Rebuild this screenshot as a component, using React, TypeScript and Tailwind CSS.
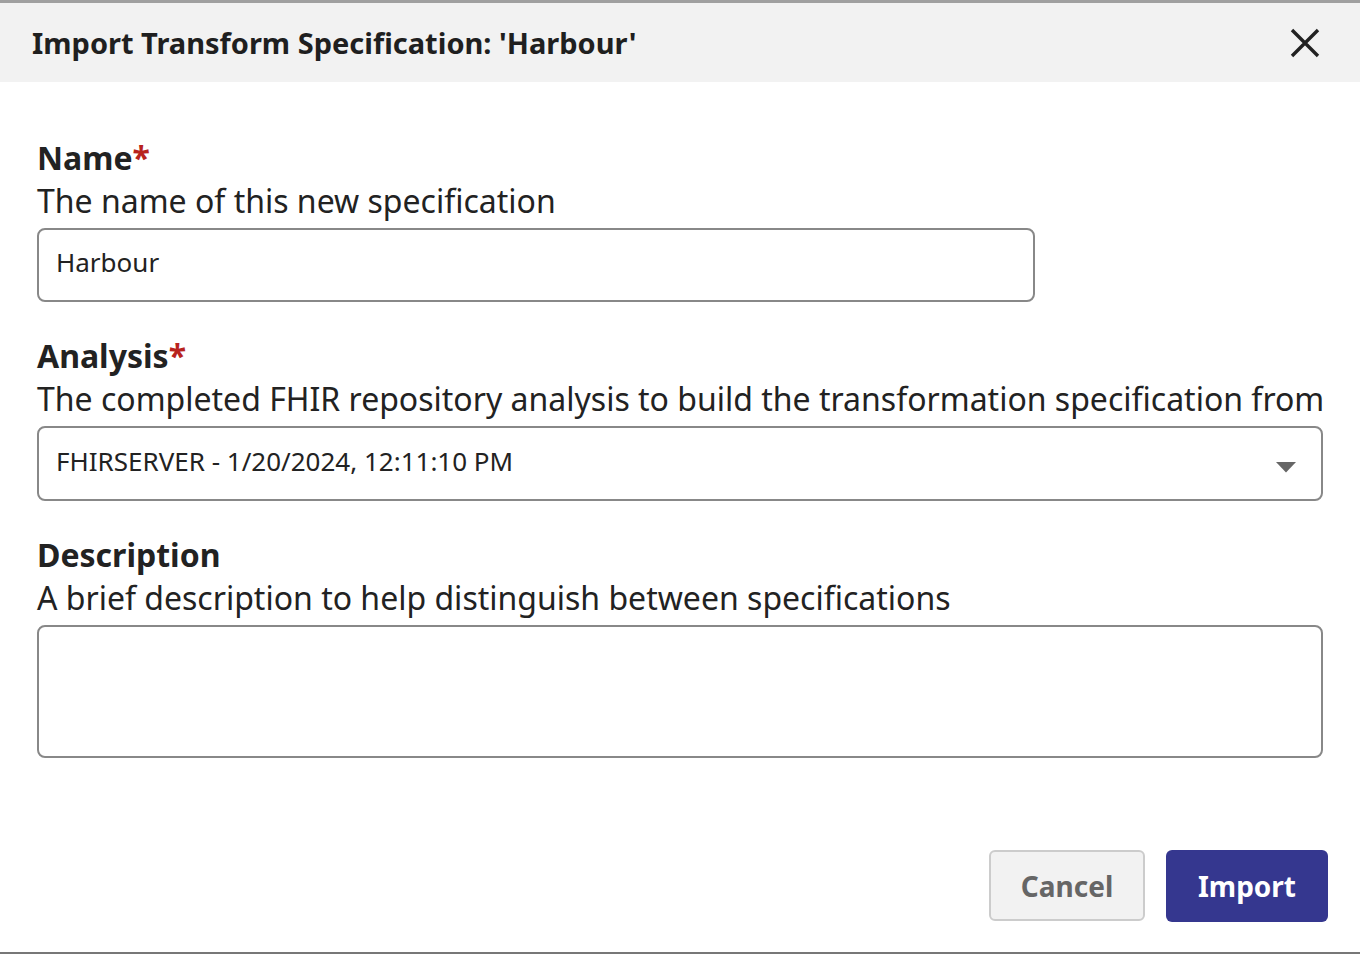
import React from "react";

export default function App() {
  return (
    <div className="w-[1360px] h-[954px] bg-white flex flex-col overflow-hidden" style={{ fontFamily: '"Noto Sans", "Open Sans", sans-serif' }}>
      <div className="h-[3px] bg-[#a0a0a0] shrink-0" />
      <div className="h-[79px] shrink-0 bg-[#f2f2f2] flex items-center justify-between pl-[32px] pr-[40px]">
        <h1 className="text-[29px] font-bold text-[#1f1f1f] leading-none">Import Transform Specification: 'Harbour'</h1>
        <button className="w-[30px] h-[30px] flex items-center justify-center">
          <svg width="30" height="30" viewBox="0 0 30 30">
            <path d="M2 2 L28 28 M28 2 L2 28" stroke="#222" strokeWidth="3.4" strokeLinecap="butt" />
          </svg>
        </button>
      </div>
      <div className="flex-1 flex flex-col px-[37px] pt-[54px] text-[#222]">
        <div className="text-[32px] leading-[43px] font-bold">
          Name<span className="text-[#b8231d]">*</span>
        </div>
        <div className="text-[32px] leading-[43px] whitespace-nowrap">The name of this new specification</div>
        <div className="mt-[6px] w-[998px] h-[74px] border-2 border-[#888] rounded-[8px] flex items-center pl-[17px] pb-[6px] text-[26px]">
          Harbour
        </div>

        <div className="mt-[32px] text-[32px] leading-[43px] font-bold">
          Analysis<span className="text-[#b8231d]">*</span>
        </div>
        <div className="text-[32px] leading-[43px] whitespace-nowrap -mr-[20px]">The completed FHIR repository analysis to build the transformation specification from</div>
        <div className="mt-[6px] w-[1286px] h-[75px] border-2 border-[#888] rounded-[8px] flex items-center justify-between pl-[17px] pr-[25px] text-[26px]">
          <span className="pb-[4px]">FHIRSERVER - 1/20/2024, 12:11:10 PM</span>
          <svg width="20" height="11" viewBox="0 0 20 11" className="mt-[8px]">
            <path d="M0 0 L20 0 L10 10.5 Z" fill="#666" />
          </svg>
        </div>

        <div className="mt-[32px] text-[32px] leading-[43px] font-bold">Description</div>
        <div className="text-[32px] leading-[43px] whitespace-nowrap">A brief description to help distinguish between specifications</div>
        <div className="mt-[6px] w-[1286px] h-[133px] border-2 border-[#888] rounded-[8px]" />

        <div className="mt-[92px] flex justify-end gap-[21px] -mr-[5px]">
          <button className="w-[156px] h-[71px] bg-[#f2f2f2] border-2 border-[#cccccc] rounded-[6px] text-[28px] font-bold text-[#666]">
            Cancel
          </button>
          <button className="w-[162px] h-[72px] bg-[#35378f] rounded-[6px] text-[28px] font-bold text-white">
            Import
          </button>
        </div>
      </div>
      <div className="h-[2px] bg-[#777] shrink-0" />
    </div>
  );
}
